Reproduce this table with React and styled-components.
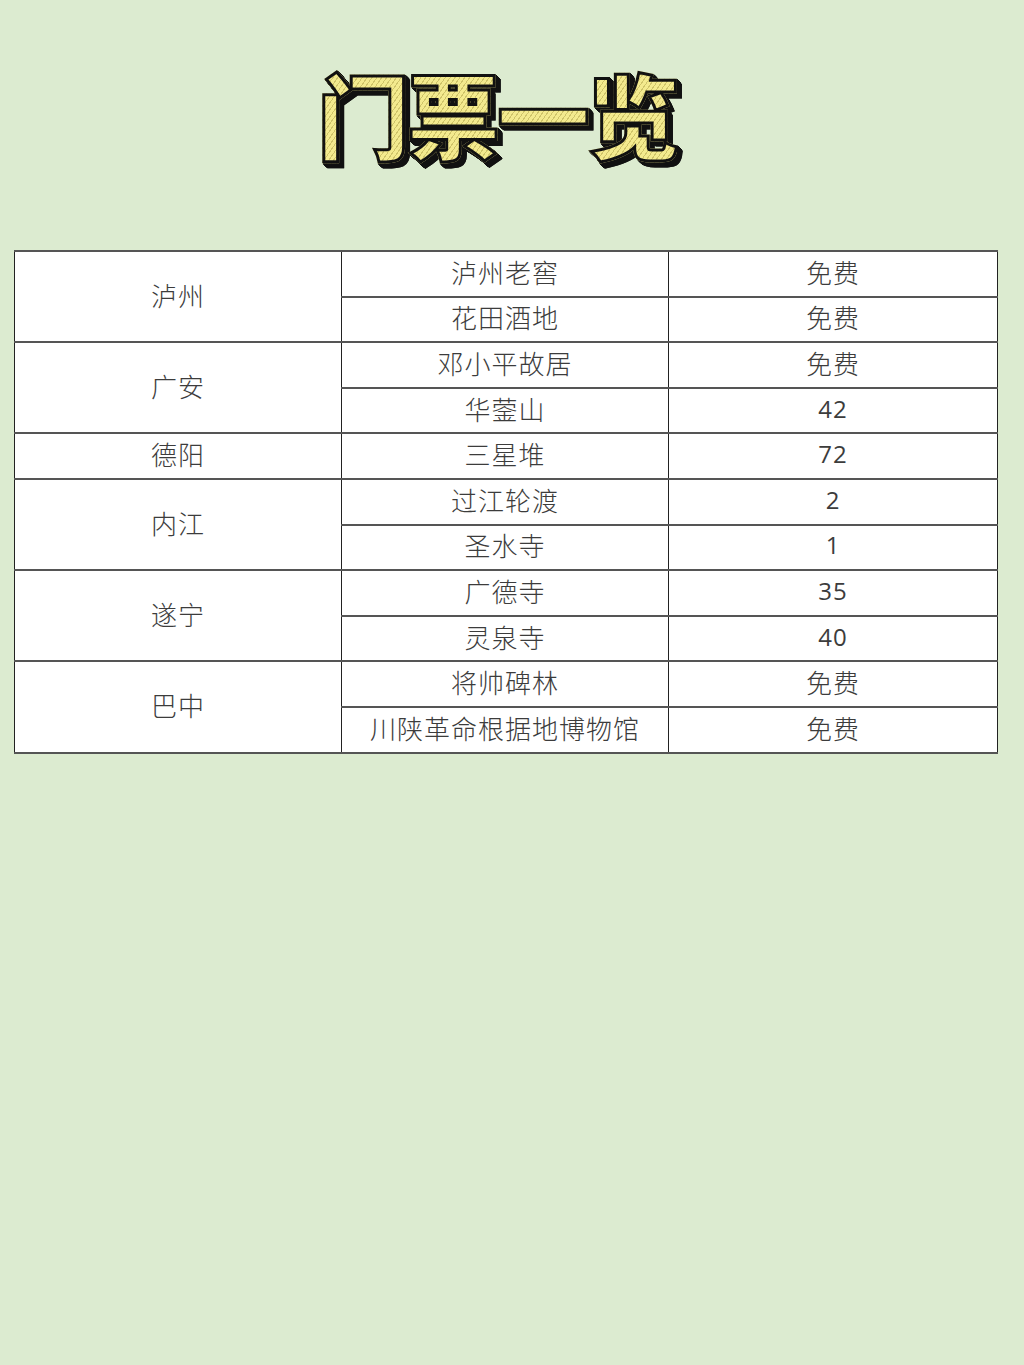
import React from "react";
import styled, { createGlobalStyle } from "styled-components";

const Global = createGlobalStyle`
  html, body { margin: 0; padding: 0; background: #dcebd0; }
  body { font-family: "Noto Sans CJK SC", "Liberation Sans", sans-serif; }
`;

const Page = styled.div`
  width: 1024px;
  min-height: 1365px;
  background: #dcebd0;
  padding-top: 48px;
  box-sizing: border-box;
`;

const TitleWrap = styled.div`
  display: flex;
  justify-content: center;
  height: 202px;
  padding-right: 30px;
  box-sizing: border-box;
`;

const Title = styled.h1`
  margin: 0;
  font-family: "Noto Sans CJK SC", sans-serif;
  font-weight: 900;
  font-size: 93px;
  line-height: 130px;
  letter-spacing: -3px;
  height: 130px;
  color: transparent;
  background: repeating-linear-gradient(
    -55deg,
    #f3ea8e 0px,
    #f3ea8e 3px,
    #cfc46a 3px,
    #cfc46a 4px
  );
  -webkit-background-clip: text;
  background-clip: text;
  -webkit-text-stroke: 3px #111;
  filter: drop-shadow(1px 1px 0 #111) drop-shadow(1px 1px 0 #111)
    drop-shadow(1px 1px 0 #111) drop-shadow(1px 1px 0 #111)
    drop-shadow(1px 1px 0 #111);
`;

const Table = styled.table`
  margin-left: 14px;
  width: 983px;
  border-collapse: collapse;
  background: #fff;
  table-layout: fixed;
`;

const Cell = styled.td`
  height: 45.6px;
  padding: 0 0 4px;
  box-sizing: border-box;
  text-align: center;
  vertical-align: middle;
  font-family: ${(p) =>
    p.$num ? '"Open Sans", "Liberation Sans", sans-serif' : '"Noto Sans CJK SC", sans-serif'};
  font-weight: ${(p) => (p.$num ? 400 : 300)};
  font-size: ${(p) => (p.$num ? "24px" : "26px")};
  line-height: 30px;
  color: #3c3c3c;
  border-top: 2px solid #555;
  border-bottom: 2px solid #555;
  border-left: 1.5px solid #222;
  border-right: 1.5px solid #222;
  white-space: nowrap;
  letter-spacing: 1px;
`;

const data = [
  { city: "泸州", items: [["泸州老窖", "免费"], ["花田酒地", "免费"]] },
  { city: "广安", items: [["邓小平故居", "免费"], ["华蓥山", "42"]] },
  { city: "德阳", items: [["三星堆", "72"]] },
  { city: "内江", items: [["过江轮渡", "2"], ["圣水寺", "1"]] },
  { city: "遂宁", items: [["广德寺", "35"], ["灵泉寺", "40"]] },
  { city: "巴中", items: [["将帅碑林", "免费"], ["川陕革命根据地博物馆", "免费"]] },
];

export default function App() {
  return (
    <Page>
      <Global />
      <TitleWrap>
        <Title>门票一览</Title>
      </TitleWrap>
      <Table>
        <colgroup>
          <col style={{ width: "327px" }} />
          <col style={{ width: "327px" }} />
          <col style={{ width: "329px" }} />
        </colgroup>
        <tbody>
          {data.map((g) =>
            g.items.map((it, i) => (
              <tr key={g.city + i}>
                {i === 0 && <Cell rowSpan={g.items.length}>{g.city}</Cell>}
                <Cell>{it[0]}</Cell>
                <Cell $num={/^\d+$/.test(it[1])}>{it[1]}</Cell>
              </tr>
            ))
          )}
        </tbody>
      </Table>
    </Page>
  );
}
